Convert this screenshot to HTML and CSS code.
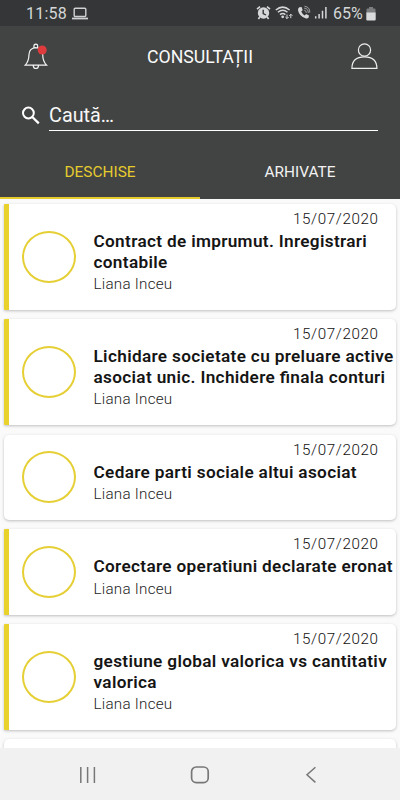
FILE: index.html
```html
<!DOCTYPE html>
<html lang="ro">
<head>
<meta charset="utf-8">
<title>Consultații</title>
<link rel="stylesheet" href="styles.css">
</head>
<body>
<div class="app">
  <div class="status">
    <span class="clock">11:58</span>
    <svg class="laptop" width="16" height="13" viewBox="0 0 16 13" fill="none" stroke="#cfd1d2"><rect x="2.2" y="1.2" width="11.6" height="8.3" rx="1" stroke-width="1.4"/><path d="M0 11.5H16" stroke-width="1.8"/></svg>
    <svg class="indicators" width="72" height="16" viewBox="0 0 72 16" fill="none" stroke="#d5d7d8">
      <circle cx="7.5" cy="8" r="5.7" fill="#d5d7d8" stroke="none"/>
      <path d="M1 4.2L4 1.7M14 4.2L11 1.7M3.8 12L2.4 13.9M11.2 12L12.6 13.9" stroke-width="1.7"/>
      <path d="M7.2 4.8V8.5L10 10" stroke="#343637" stroke-width="1.4"/>
      <path d="M19.8 5Q26.7-.8 33.6 5M21.9 7.3Q26.7 3.2 31.5 7.3M24 9.6Q26.7 7.4 29.4 9.6" stroke-width="1.5"/>
      <circle cx="26.7" cy="11.8" r="1.4" fill="#d5d7d8" stroke="none"/>
      <path d="M31 9.5V13.6M29.4 12L31 13.6 32.6 12M34.8 13.2V9.2M33.2 10.8L34.8 9.2 36.4 10.8" stroke-width="1"/>
      <path d="M43.3 2.2L45.6 2 46.7 5.2 45.2 6.6Q46.2 9 48.6 10.4L50.1 9.1 53 10.5 52.5 12.8Q51.5 13.8 49.5 13.3 43.2 11.2 42 5.2 41.8 3 43.3 2.2Z" fill="#d5d7d8" stroke="none"/>
      <path d="M48.2 5.2Q50.3 5.4 50.3 7.8M48.2 3.1Q52.3 3.4 52.3 8M48.5 1.2Q54 2 53.8 7.6" stroke="#9fa1a2" stroke-width="1"/>
      <path d="M59.7 11.3V13.5M63.1 9V13.5M66.5 5.8V13.5M69.9 2V13.5" stroke-width="1.5"/>
    </svg>
    <span class="percent">65%</span>
    <svg class="battery" width="10" height="14" viewBox="0 0 10 14"><path d="M3 0H7V1.5H8.5Q9.5 1.5 9.5 2.5V6H.5V2.5Q.5 1.5 1.5 1.5H3Z" fill="#7b7d7e"/><path d="M.3 5.5H9.7V12.5Q9.7 13.5 8.7 13.5H1.3Q.3 13.5.3 12.5Z" fill="#d8dadb"/></svg>
  </div>

  <header class="header">
    <svg class="bell" width="26" height="30" viewBox="0 0 26 30" fill="none" stroke="#f3f3f3" stroke-width="1.2">
      <path d="M9.9 6.2V4.4Q9.9 2.2 11.8 2.2T13.7 4.4V6.2M11.8 5.6Q5.2 6.1 5 12.5 4.8 19.5 1.2 23.2H22.6Q18.8 19.5 18.7 12.5 18.4 6.1 11.8 5.6ZM9.2 23.4Q9.4 26.5 11.9 26.5T14.6 23.4"/>
      <circle cx="18.2" cy="8" r="4.5" fill="#df3b3d" stroke="none"/>
    </svg>
    <h1 class="title">CONSULTAȚII</h1>
    <svg class="person" width="28" height="28" viewBox="0 0 28 28" fill="none" stroke="#eee" stroke-width="1.2"><circle cx="14.5" cy="7" r="6.1"/><path d="M1.9 25.4Q1.9 13.9 14.4 13.9T26.9 25.4Z"/></svg>
  </header>

  <div class="search">
    <svg class="lens" width="20" height="20" viewBox="0 0 20 20" fill="none" stroke="#fff"><circle cx="7.4" cy="7" r="5.4" stroke-width="2"/><path d="M11.3 11L17.8 17.3" stroke-width="2.3"/></svg>
    <div class="field">Caută…</div>
  </div>

  <nav class="tabs">
    <div class="tab active"><span>DESCHISE</span></div>
    <div class="tab"><span>ARHIVATE</span></div>
  </nav>

  <main class="list">
    <article class="card marked"><div class="ring"></div><div class="content"><div class="date">15/07/2020</div><h2>Contract de imprumut. Inregistrari<br>contabile</h2><div class="name">Liana Inceu</div></div></article>
    <article class="card marked"><div class="ring"></div><div class="content"><div class="date">15/07/2020</div><h2>Lichidare societate cu preluare active<br>asociat unic. Inchidere finala conturi</h2><div class="name">Liana Inceu</div></div></article>
    <article class="card"><div class="ring"></div><div class="content"><div class="date">15/07/2020</div><h2>Cedare parti sociale altui asociat</h2><div class="name">Liana Inceu</div></div></article>
    <article class="card marked"><div class="ring"></div><div class="content"><div class="date">15/07/2020</div><h2>Corectare operatiuni declarate eronat</h2><div class="name">Liana Inceu</div></div></article>
    <article class="card marked"><div class="ring"></div><div class="content"><div class="date">15/07/2020</div><h2>gestiune global valorica vs cantitativ<br>valorica</h2><div class="name">Liana Inceu</div></div></article>
    <article class="card next"></article>
  </main>

  <footer class="navbar">
    <svg width="18" height="18" viewBox="0 0 18 18" stroke="#777" stroke-width="1.5"><path d="M1.8 1V17M8.6 1V17M15.4 1V17"/></svg>
    <svg class="home" width="20" height="18" viewBox="0 0 20 18" fill="none" stroke="#777" stroke-width="1.7"><rect x="1.6" y="1" width="16.6" height="15.6" rx="4.6"/></svg>
    <svg width="12" height="18" viewBox="0 0 12 18" fill="none" stroke="#777" stroke-width="1.5"><path d="M10.4 1.2L2 8.8L10.4 16.4"/></svg>
  </footer>
</div>
</body>
</html>
```
FILE: styles.css
```css
* { box-sizing: border-box; }
body { margin: 0; font-family: Roboto, "Liberation Sans", sans-serif; }
svg { display: block; flex: none; }
.app { width: 400px; height: 800px; display: flex; flex-direction: column; overflow: hidden; background: #fafafa; }

.status { height: 26px; flex: none; display: flex; align-items: center; background: #343637; color: #d5d7d8; padding-left: 26px; font-size: 16px; }
.clock { width: 46px; line-height: 27px; padding-top: 1px; letter-spacing: 0.2px; }
.indicators { margin-left: 168px; }
.percent { width: 33px; margin-left: 5px; padding-top: 1px; }
.battery { margin-top: 1px; }

.header { height: 64px; flex: none; display: flex; align-items: flex-start; background: #424443; padding: 16px 22px 0 24px; }
.title { flex: 1; margin: 0; padding-left: 0; text-align: center; color: #fafafa; font-size: 17.7px; line-height: 30px; font-weight: 400; }
.person { margin-top: 1px; }

.search { height: 56px; flex: none; display: flex; align-items: flex-start; background: #424443; padding: 10px 22px 0 21px; }
.lens { margin-top: 6px; }
.field { flex: 1; height: 31px; margin-left: 8px; border-bottom: 1px solid #fff; color: #f7f7f7; font-size: 19.8px; line-height: 32px; }

.tabs { height: 53px; flex: none; display: flex; background: #424443; }
.tab { flex: 1; height: 53px; text-align: center; color: #f2f2f2; font-size: 15.4px; line-height: 53px; }
.tab.active { color: #e5cb2e; border-bottom: 2px solid #e6cd2d; }

.list { flex: 1; min-height: 0; overflow: hidden; padding: 5px 4px 0; display: flex; flex-direction: column; gap: 9.3px; }
.card { flex: none; display: flex; align-items: center; background: #fff; border-radius: 5px; padding-left: 18px; border: 0 solid #e9d22b; box-shadow: 0 1px 3px rgba(0, 0, 0, 0.24); }
.card.marked { border-left-width: 5px; border-radius: 1px 5px 5px 1px; padding-left: 13px; }
.card.next { height: 30px; }
.ring { width: 54px; height: 52px; flex: none; border: 2px solid #e5cf35; border-radius: 50%; }
.content { flex: 1; min-width: 0; padding: 5px 0 15px 17.5px; white-space: nowrap; color: #151515; }
.date { height: 22px; text-align: right; padding-right: 17.5px; font-size: 15.2px; line-height: 20px; letter-spacing: 0.6px; font-weight: 300; color: #111; }
h2 { margin: 0; font-size: 17.2px; line-height: 20.5px; font-weight: 600; letter-spacing: 0.33px; font-feature-settings: "liga" 1; }
.name { height: 23px; font-size: 15.2px; line-height: 24px; color: #1c1c1c; letter-spacing: 0.25px; font-weight: 300; }

.navbar { height: 52px; flex: none; display: flex; align-items: flex-start; justify-content: space-between; background: #f1f1f1; padding: 18px 83px 0 79px; }
.home { margin-right: 3px; }
```
